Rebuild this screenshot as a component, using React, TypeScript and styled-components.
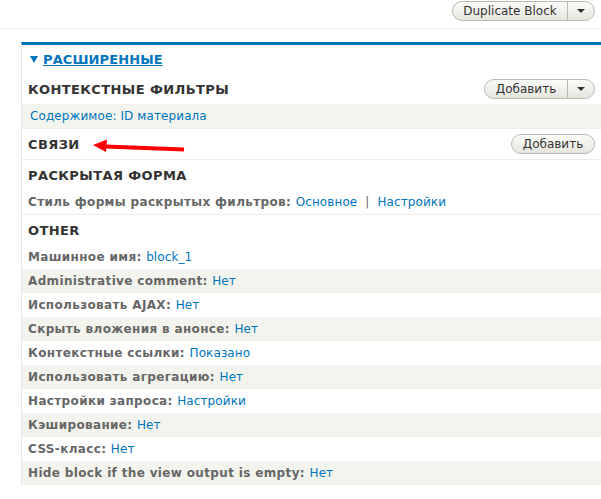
import { Fragment } from "react"
import styled, { createGlobalStyle } from "styled-components"

const GlobalStyle = createGlobalStyle`
    body {
        margin: 0;
        background: #ffffff;
        font-family: "DejaVu Sans", "Liberation Sans", sans-serif;
        color: #333;
    }
`

const TopBar = styled.div`
    height: 29px;
    box-sizing: border-box;
    border-bottom: 1px solid #ececec;
    display: flex;
    justify-content: flex-end;
    align-items: flex-start;
    padding: 1px 6px 0 0;
`

const SplitButton = styled.div`
    display: flex;
    align-items: stretch;
    height: 20px;
    box-sizing: border-box;
    border: 1px solid #b9b9b2;
    border-radius: 11px;
    background: linear-gradient(#fbfbf9, #e6e6de);
    font-size: 12px;
    color: #333;
    > span {
        display: flex;
        align-items: center;
    }
`

const ButtonLabel = styled.span<{ $w: number }>`
    width: ${p => p.$w}px;
    justify-content: center;
`

const Caret = styled.span`
    width: 26px;
    justify-content: center;
    border-left: 1px solid #b9b9b2;
    &::after {
        content: "";
        border-left: 4px solid transparent;
        border-right: 4px solid transparent;
        border-top: 4px solid #333;
    }
`

const Panel = styled.div`
    margin: 13px 0 0 21px;
    border-top: 3px solid #0074bd;
    border-left: 1px solid #e6e6e6;
`

const Advanced = styled.div`
    height: 29px;
    display: flex;
    align-items: center;
    padding-left: 8px;
    color: #0074bd;
    font-size: 13px;
    font-weight: bold;
    letter-spacing: 0.1px;
    > span {
        text-decoration: underline;
        margin-left: 5px;
    }
`

const Triangle = styled.i`
    display: inline-block;
    border-left: 4px solid transparent;
    border-right: 4px solid transparent;
    border-top: 7px solid #0074bd;
`

const Bucket = styled.section`
    border-bottom: 1px solid #ececec;
    &:last-child {
        border-bottom: none;
    }
`

const BucketHead = styled.div`
    position: relative;
    height: 30px;
    display: flex;
    align-items: center;
    justify-content: space-between;
    padding: 0 6px;
    > h3 {
        margin: 0;
        font-size: 13px;
        font-weight: bold;
        text-transform: uppercase;
        letter-spacing: 0.4px;
        color: #333;
    }
`

const Row = styled.div<{ $shade?: boolean; $indent?: number }>`
    height: 24px;
    display: flex;
    align-items: center;
    padding-left: ${p => p.$indent ?? 6}px;
    background: ${p => (p.$shade ? "#f3f4ee" : "#ffffff")};
    font-size: 12px;
    white-space: pre;
`

const Label = styled.span`
    font-weight: bold;
    color: #666;
    letter-spacing: 0.35px;
`

const Value = styled.a`
    color: #0074bd;
    text-decoration: none;
    letter-spacing: 0.1px;
`

const Sep = styled.span`
    color: #666;
    margin: 0 8px;
`

const Arrow = styled.svg`
    position: absolute;
    left: 49px;
    top: 9px;
`

const others: [string, string][] = [
    ["Машинное имя:", "block_1"],
    ["Administrative comment:", "Нет"],
    ["Использовать AJAX:", "Нет"],
    ["Скрыть вложения в анонсе:", "Нет"],
    ["Контекстные ссылки:", "Показано"],
    ["Использовать агрегацию:", "Нет"],
    ["Настройки запроса:", "Настройки"],
    ["Кэширование:", "Нет"],
    ["CSS-класс:", "Нет"],
    ["Hide block if the view output is empty:", "Нет"],
]

export default () => {
    return (
        <Fragment>
            <GlobalStyle />
            <TopBar>
                <SplitButton>
                    <ButtonLabel $w={114}>Duplicate Block</ButtonLabel>
                    <Caret />
                </SplitButton>
            </TopBar>
            <Panel>
                <Advanced>
                    <Triangle />
                    <span>РАСШИРЕННЫЕ</span>
                </Advanced>
                <Bucket>
                    <BucketHead>
                        <h3>Контекстные фильтры</h3>
                        <SplitButton>
                            <ButtonLabel $w={82}>Добавить</ButtonLabel>
                            <Caret />
                        </SplitButton>
                    </BucketHead>
                    <Row $shade $indent={8}>
                        <Value>Содержимое: ID материала</Value>
                    </Row>
                </Bucket>
                <Bucket>
                    <BucketHead>
                        <h3>Связи</h3>
                        <SplitButton>
                            <ButtonLabel $w={82}>Добавить</ButtonLabel>
                        </SplitButton>
                        <Arrow width="120" height="16" viewBox="0 0 120 16">
                            <path d="M34 8.5 L113 11.5" stroke="#ff0000" strokeWidth="4" />
                            <polygon points="22,7 36,1.5 35,14" fill="#ff0000" />
                        </Arrow>
                    </BucketHead>
                </Bucket>
                <Bucket>
                    <BucketHead>
                        <h3>Раскрытая форма</h3>
                    </BucketHead>
                    <Row>
                        <Label>Стиль формы раскрытых фильтров: </Label>
                        <Value>Основное</Value>
                        <Sep>|</Sep>
                        <Value>Настройки</Value>
                    </Row>
                </Bucket>
                <Bucket>
                    <BucketHead>
                        <h3>Other</h3>
                    </BucketHead>
                    {others.map(([label, value], i) =>
                        <Row key={label} $shade={i % 2 === 1}>
                            <Label>{label} </Label>
                            <Value>{value}</Value>
                        </Row>
                    )}
                </Bucket>
            </Panel>
        </Fragment>
    )
}
